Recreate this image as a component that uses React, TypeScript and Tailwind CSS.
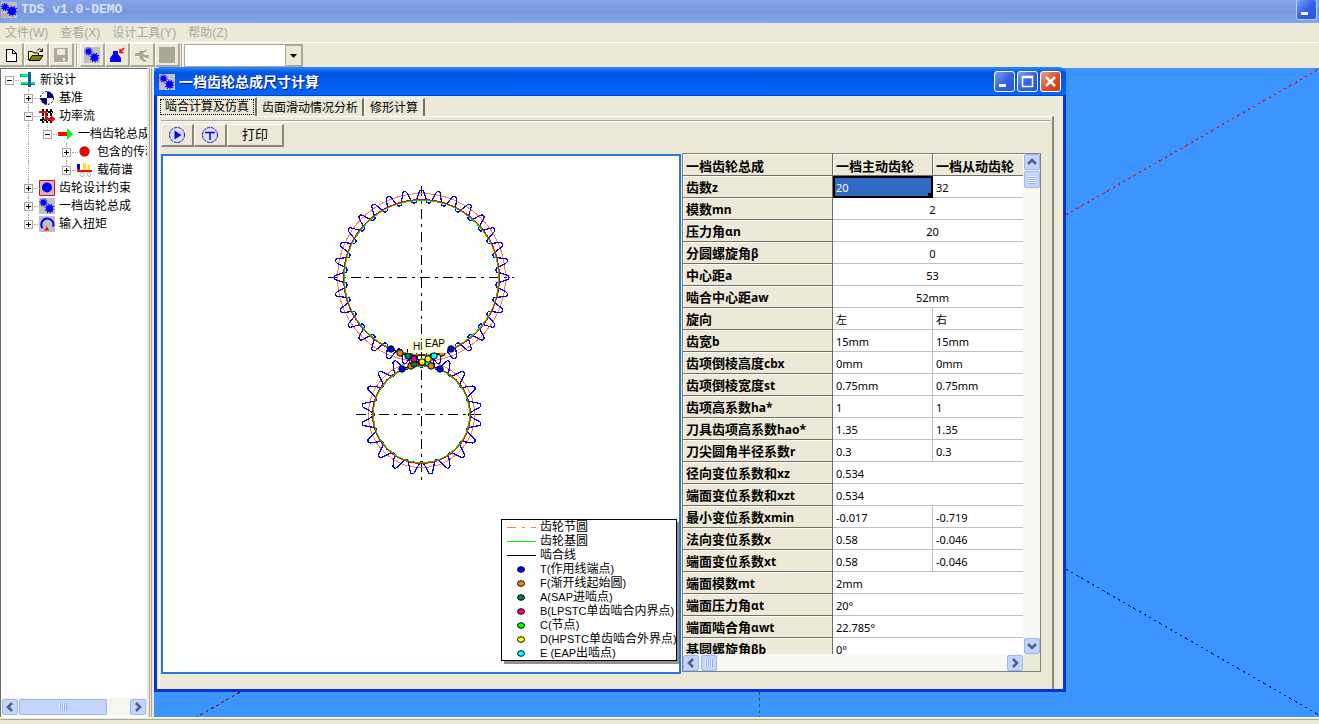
import React, { useState } from 'react';
import clsx from 'clsx';

const UI_FONT = "font-['Liberation_Sans','Noto_Sans_CJK_SC',sans-serif]";

interface TreeNode {
  label: string;
  icon: string;
  open: boolean;
  // one entry per 19px column: '' empty, 'v' line, 'top' line ends at the box
  guides: string[];
}

const TREE: TreeNode[] = [
  { label: '新设计', icon: 'root', open: true, guides: ['box'] },
  { label: '基准', icon: 'datum', open: false, guides: ['', 'v'] },
  { label: '功率流', icon: 'flow', open: true, guides: ['', 'v'] },
  { label: '一档齿轮总成', icon: 'arrow', open: true, guides: ['', 'v', 'top'] },
  { label: '包含的传动部件', icon: 'dot', open: false, guides: ['', 'v', '', 'v'] },
  { label: '载荷谱', icon: 'load', open: false, guides: ['', 'v', '', 'top'] },
  { label: '齿轮设计约束', icon: 'limit', open: false, guides: ['', 'v'] },
  { label: '一档齿轮总成', icon: 'gears', open: false, guides: ['', 'v'] },
  { label: '输入扭矩', icon: 'torque', open: false, guides: ['', 'top'] },
];

interface ParamRow {
  name: string;
  sym?: string;
  values: string[];
  center?: boolean;
}

const ROWS: ParamRow[] = [
  { name: '齿数', sym: 'z', values: ['20', '32'] },
  { name: '模数', sym: 'mn', values: ['2'], center: true },
  { name: '压力角', sym: 'αn', values: ['20'], center: true },
  { name: '分圆螺旋角', sym: 'β', values: ['0'], center: true },
  { name: '中心距', sym: 'a', values: ['53'], center: true },
  { name: '啮合中心距', sym: 'aw', values: ['52mm'], center: true },
  { name: '旋向', values: ['左', '右'] },
  { name: '齿宽', sym: 'b', values: ['15mm', '15mm'] },
  { name: '齿项倒棱高度', sym: 'cbx', values: ['0mm', '0mm'] },
  { name: '齿项倒棱宽度', sym: 'st', values: ['0.75mm', '0.75mm'] },
  { name: '齿项高系数', sym: 'ha*', values: ['1', '1'] },
  { name: '刀具齿项高系数', sym: 'hao*', values: ['1.35', '1.35'] },
  { name: '刀尖圆角半径系数', sym: 'r', values: ['0.3', '0.3'] },
  { name: '径向变位系数和', sym: 'xz', values: ['0.534'] },
  { name: '端面变位系数和', sym: 'xzt', values: ['0.534'] },
  { name: '最小变位系数', sym: 'xmin', values: ['-0.017', '-0.719'] },
  { name: '法向变位系数', sym: 'x', values: ['0.58', '-0.046'] },
  { name: '端面变位系数', sym: 'xt', values: ['0.58', '-0.046'] },
  { name: '端面模数', sym: 'mt', values: ['2mm'] },
  { name: '端面压力角', sym: 'αt', values: ['20°'] },
  { name: '端面啮合角', sym: 'αwt', values: ['22.785°'] },
  { name: '基圆螺旋角', sym: 'βb', values: ['0°'] },
];

// color, latin prefix, description
const LEGEND_POINTS = [
  ['#0000ff', 'T(', '作用线端点'],
  ['#ff8000', 'F(', '渐开线起始圆'],
  ['#008040', 'A(SAP', '进啮点'],
  ['#ff0080', 'B(LPSTC', '单齿啮合内界点'],
  ['#00ff00', 'C(', '节点'],
  ['#ffff00', 'D(HPSTC', '单齿啮合外界点'],
  ['#00ffff', 'E (EAP', '出啮点'],
];

const MESH_POINTS: [number, number, string][] = [
  [228, 193, '#0000ff'],
  [237, 197, '#ff8000'],
  [245, 200, '#008080'],
  [279, 197, '#ff8000'],
  [248, 210, '#ff8000'],
  [251, 208, '#008040'],
  [251, 203, '#ff0080'],
  [265, 207, '#00ffff'],
  [268, 210, '#ff8000'],
  [265, 203, '#ffff00'],
  [271, 200, '#00ffff'],
  [259, 206, '#ffff00'],
  [288, 193, '#0000ff'],
  [239, 213, '#0000ff'],
  [277, 213, '#0000ff'],
];

function polar(cx: number, cy: number, r: number, a: number) {
  return `${(cx + r * Math.cos(a)).toFixed(2)} ${(cy + r * Math.sin(a)).toFixed(2)}`;
}

function gearPath(
  cx: number, cy: number, teeth: number, phase: number,
  tip: number, root: number, tipHalf: number, rootHalf: number,
) {
  const step = (Math.PI * 2) / teeth;
  let d = '';
  for (let i = 0; i < teeth; i++) {
    const a = phase + i * step;
    const p = (r: number, off: number) => polar(cx, cy, r, a + off);
    d += `${i === 0 ? 'M' : 'L'}${p(root + 2, -rootHalf)} `;
    d += `L${p(tip - 3, -tipHalf)} Q${p(tip, -tipHalf * 0.8)} ${p(tip, 0)} `;
    d += `Q${p(tip, tipHalf * 0.8)} ${p(tip - 3, tipHalf)} L${p(root + 2, rootHalf)} `;
    d += `C${p(root - 1, rootHalf)} ${p(root - 1, step - rootHalf)} ${p(root + 2, step - rootHalf)} `;
  }
  return d;
}

function MiniGear({ x, y, r }: { x: number; y: number; r: number }) {
  return (
    <g>
      <circle cx={x} cy={y} r={r - 0.5} fill="#0000ff" />
      {[0, 36, 72, 108, 144].map((deg) => (
        <rect key={deg} x={x - r - 1} y={y - 0.5} width={r * 2 + 2} height={1} fill="#0000ff" transform={`rotate(${deg + 10} ${x} ${y})`} />
      ))}
    </g>
  );
}

function Icon({ name }: { name: string }) {
  return (
    <svg width="16" height="16" viewBox="0 0 16 16" className="shrink-0" aria-hidden="true">
      {name === 'root' && (
        <>
          <path d="M0 2h8v3H0z M1 10h14v3H1z" fill="#00f080" />
          <path d="M0 2h1v3H0zM11 12h4v1h-4zM1 12h7v1H1z" fill="#008070" />
          <path d="M8 0h3v15H8z" fill="#00669c" />
        </>
      )}
      {name === 'datum' && (
        <>
          <circle cx="8" cy="8" r="6.5" fill="#fff" stroke="#000" strokeDasharray="2 1.5" strokeWidth="1" />
          <path d="M8 8V1.500A6.500 6.500 0 0 1 14.500 8zM8 8v6.500A6.500 6.500 0 0 1 1.500 8z" fill="#000080" />
        </>
      )}
      {name === 'flow' && (
        <>
          <path d="M4 1v14M8 1v14M12 1v14M1 4h13M1 12h13" stroke="#000" strokeWidth="2" strokeDasharray="3 1" fill="none" />
          <path d="M0 4h7v7h7M12 8.500l3 2.500-3 2.500" stroke="#ff0000" strokeWidth="2" fill="none" />
        </>
      )}
      {name === 'arrow' && (
        <>
          <path d="M0 6h10v4H0z" fill="#ff0000" />
          <path d="M9 2l6 6-6 6z" fill="#00ff00" />
        </>
      )}
      {name === 'dot' && <circle cx="7.500" cy="7.500" r="4.800" fill="#ff0000" stroke="#600000" strokeWidth=".6" />}
      {name === 'load' && (
        <>
          <path d="M0 2h3v5H0z" fill="#0000ff" />
          <path d="M0 7h3v1h12v2H0z" fill="#ff0000" />
          <path d="M6 1h3v7H6zM11 3h2v5h-2z" fill="#ffe000" />
          <circle cx="5" cy="12.500" r="2" fill="none" stroke="#b0b0b0" />
          <circle cx="12" cy="12.500" r="2" fill="none" stroke="#b0b0b0" />
        </>
      )}
      {name === 'limit' && (
        <>
          <path d="M.5.5h15v15H.5z" fill="#c0c0c0" stroke="#ff0000" />
          <circle cx="8" cy="7.500" r="5" fill="#0000ff" />
        </>
      )}
      {name === 'gears' && (
        <>
          <path d="M0 0h16v16H0z" fill="#c0c0c0" />
          <MiniGear x={4.5} y={4.5} r={3.2} />
          <MiniGear x={10.5} y={10.5} r={4} />
        </>
      )}
      {name === 'app' && (
        <>
          <path d="M0 0h16v16H0z" fill="#c0c0c0" />
          <MiniGear x={4} y={5} r={3.2} />
          <MiniGear x={11} y={9} r={4.6} />
          <path d="M1 12.500h3M2.500 12.500v3M5.500 12v3.500" stroke="#f08080" />
        </>
      )}
      {name === 'torque' && (
        <>
          <path d="M0 0h16v16H0z" fill="#c0c0c0" />
          <path d="M3.500 12A6 6 0 1 1 14 10.500" fill="none" stroke="#0000ff" strokeWidth="2" />
          <path d="M5 14.500l3-4 2 4z" fill="#ff0000" />
        </>
      )}
      {name === 'new' && (
        <path d="M3.500 2.500h6l4 4v8h-10zM9.500 2.500v4h4" fill="#fff" stroke="#000" shapeRendering="crispEdges" />
      )}
      {name === 'open' && (
        <>
          <path d="M.5 13V4.500h4l1 1.500h5v3" fill="#ffff80" stroke="#000" />
          <path d="M1 13.500l3-5h11l-3.500 5z" fill="#808000" stroke="#000" />
          <path d="M9 3.500c1.500-2 3.500-2 4.500.5M14.500 1.500v3h-3" fill="none" stroke="#000" />
        </>
      )}
      {name === 'save' && (
        <>
          <path d="M2 2h14v14H3l-1-1z" fill="#fff" />
          <path d="M1 1h14v14H2l-1-1z" fill="#aca899" />
          <path d="M4 2h8v6H4zM10 11h2v3h-2z" fill="#ece9d8" />
        </>
      )}
      {name === 'weight' && (
        <>
          <path d="M1 15v-4l3-4V4h5v3l3 4v4z" fill="#0000ff" />
          <path d="M15 1l-4 4M11 2v3.500h3.500" fill="none" stroke="#ff0000" strokeWidth="1.500" />
        </>
      )}
      {name === 'swap' && (
        <>
          <path d="M2 8h4l3 2v3M14 9h-3l-3-3 3-3" fill="none" stroke="#fff" strokeWidth="2" transform="translate(1 1)" />
          <path d="M1 6h4V4h5l3-2-1 3-3 1 2 2h4v3h-4l-2-2 1 3 3 2-3 1-4-3-1-3H1z" fill="#aca899" />
        </>
      )}
      {name === 'block' && <path d="M0 0h16v16H0z" fill="#aca899" />}
      {name === 'play' && (
        <>
          <circle cx="8" cy="8" r="7.500" fill="#dfe4f4" stroke="#0000ff" strokeDasharray="3 1" />
          <path d="M5.500 3.500v9l7-4.500z" fill="#0000ff" />
        </>
      )}
      {name === 'tee' && (
        <>
          <circle cx="8" cy="8" r="7.500" fill="#dfe4f4" stroke="#0000ff" strokeDasharray="3 1" />
          <path d="M3 5.500h10M8 5.500V13" stroke="#0000ff" strokeWidth="1.500" />
        </>
      )}
    </svg>
  );
}

function WindowButton({ kind, faded }: { kind: 'min' | 'max' | 'close'; faded?: boolean }) {
  const names = { min: '最小化', max: '最大化', close: '关闭' };
  return (
    <button
      aria-label={names[kind]}
      className={clsx(
        'flex h-[21px] w-[21px] items-center justify-center rounded-[3px] border bg-linear-to-br',
        kind === 'close' ? 'from-[#f0a080] via-[#e0502c] to-[#c83808]' : 'from-[#7e9ef8] via-[#3462e8] to-[#1a58e0]',
        faded ? 'border-[#b8ccf4]' : 'border-white',
      )}
    >
      <svg width="15" height="15" viewBox="0 0 15 15" fill="none" stroke="#fff">
        {kind === 'min' && <path d="M2 11.500h7" strokeWidth="3" />}
        {kind === 'max' && <path d="M2.500 2.500h10v10h-10zM2 3.500h11" strokeWidth="1.500" />}
        {kind === 'close' && <path d="M3 3l9 9M12 3l-9 9" strokeWidth="2.500" />}
      </svg>
    </button>
  );
}

const ARROWS = {
  left: 'M9 3L5 7l4 4',
  right: 'M5 3l4 4-4 4',
  up: 'M3 9l4-4 4 4',
  down: 'M3 5l4 4 4-4',
};

function ScrollButton({ dir }: { dir: keyof typeof ARROWS }) {
  return (
    <button
      aria-label={`scroll ${dir}`}
      className="flex h-4 w-4 shrink-0 items-center justify-center rounded-xs border border-[#9db6ee] bg-[#c4d4fc]"
    >
      <svg width="14" height="14" viewBox="0 0 14 14" fill="none" stroke="#4d6185" strokeWidth="2.500" className="shrink-0">
        <path d={ARROWS[dir]} />
      </svg>
    </button>
  );
}

function Grip({ vertical }: { vertical?: boolean }) {
  return (
    <span className={clsx('flex', vertical && 'flex-col')}>
      {[0, 1, 2, 3].map((i) => (
        <span key={i} className={clsx('box-content border-[#8cb0f8] bg-[#eef4fe]', vertical ? 'h-px w-2 border-b' : 'h-2 w-px border-r')} />
      ))}
    </span>
  );
}

function ToolButton({ icon, label, disabled }: { icon: string; label: string; disabled?: boolean }) {
  return (
    <button
      aria-label={label}
      disabled={disabled}
      className="flex h-6 w-[25px] items-center justify-center border-r-2 border-b-2 border-l border-t border-[#aca899] border-t-white border-l-white"
    >
      <Icon name={icon} />
    </button>
  );
}

function MainHeader() {
  const menus = ['文件(W)', '查看(X)', '设计工具(Y)', '帮助(Z)'];
  return (
    <header>
      <div className="flex h-[23px] items-center bg-linear-to-b from-[#86a6ea] via-[#7a96df] to-[#82a8ea] pr-0.5">
        <span className="pb-1 pl-px">
          <Icon name="app" />
        </span>
        <h1 className="ml-1 flex-1 pb-1 font-['Liberation_Mono',monospace] text-[13px] leading-4 font-bold text-[#d8e4f8]">TDS v1.0-DEMO</h1>
        <div className="pb-1">
          <WindowButton kind="min" faded />
        </div>
      </div>
      <nav className="flex h-5 items-center gap-3 border-b border-white pl-[5px] text-xs text-[#aca899]">
        {menus.map((m) => (
          <button key={m} disabled>{m}</button>
        ))}
      </nav>
      <div className="flex h-[25px] items-start">
        <div className="-ml-px flex">
          <ToolButton icon="new" label="新建" />
          <ToolButton icon="open" label="打开" />
          <ToolButton icon="save" label="保存" disabled />
        </div>
        <span className="mx-0.5 box-content h-6 w-px border-r border-white bg-[#aca899]" />
        <ToolButton icon="gears" label="齿轮" />
        <ToolButton icon="weight" label="载荷" />
        <ToolButton icon="swap" label="切换" disabled />
        <ToolButton icon="block" label="停止" disabled />
        <span className="mx-px box-content h-6 w-px border-r border-white bg-[#aca899]" />
        <div className="relative mt-px h-[23px] w-[119px] border border-[#aca899] bg-white">
          <select aria-label="选择" className="h-full w-full appearance-none outline-none">
            <option></option>
          </select>
          <span className="pointer-events-none absolute inset-y-0 right-0 flex w-[17px] items-center justify-center border border-[#aca899] bg-[#ece9d8]">
            <svg width="7" height="4" viewBox="0 0 7 4"><path d="M0 0h7L3.500 4z" /></svg>
          </span>
        </div>
      </div>
    </header>
  );
}

function TreeRow({ node }: { node: TreeNode }) {
  const last = node.guides.length - 1;
  return (
    <li className="flex h-[18px] items-center">
      {node.guides.map((g, i) => (
        <span key={i} className="relative flex h-[18px] w-[19px] shrink-0 items-center pl-1">
          {(g === 'v' || g === 'top') && (
            <span className={clsx('absolute top-0 left-2 border-l border-dotted border-[#aca899]', g === 'v' ? 'h-[18px]' : 'h-[9px]')} />
          )}
          {i === last && (
            <>
              <span className="absolute top-[9px] left-3.5 w-[6px] border-t border-dotted border-[#aca899]" />
              <button aria-label={node.label} className="relative h-[9px] w-[9px] border border-[#aca899] bg-white">
                <span className="absolute top-[3px] left-px h-px w-[5px] bg-black" />
                {!node.open && <span className="absolute top-px left-[3px] h-[5px] w-px bg-black" />}
              </button>
            </>
          )}
        </span>
      ))}
      <Icon name={node.icon} />
      <span className="ml-1 text-xs leading-[18px] whitespace-nowrap">{node.label}</span>
    </li>
  );
}

function TreePanel() {
  return (
    <aside className="flex w-[154px] shrink-0">
      <div className="flex w-[148px] flex-col border-t border-r border-l border-[#716f64] border-r-[#ece9d8] bg-white">
        <ul className="flex-1 overflow-hidden pt-0.5">
          {TREE.map((n, i) => (
            <TreeRow key={i} node={n} />
          ))}
        </ul>
        <div className="mb-0.5 flex h-[17px] items-center bg-[#f6f5f0] px-px">
          <ScrollButton dir="left" />
          <div className="mx-px flex h-4 w-[88px] items-center justify-center rounded-xs border border-[#9db6ee] bg-[#c4d4fc]">
            <Grip />
          </div>
          <span className="flex-1" />
          <ScrollButton dir="right" />
        </div>
      </div>
      <div className="ml-px w-px bg-[#aca899]" />
      <div className="ml-px w-px bg-[#aca899]" />
    </aside>
  );
}

function GearDrawing() {
  return (
    <svg width="516" height="516" viewBox="0 0 516 516" fill="none" shapeRendering="crispEdges" className="max-w-full">
      <path d="M165 121.500h186M193 258.500h130M258.500 30v294" stroke="#000" strokeDasharray="10 5 3 5" />
      <circle cx="258.500" cy="121.500" r="84" stroke="#ff8040" />
      <circle cx="258.500" cy="258.500" r="53" stroke="#ff8040" />
      <path d={gearPath(258.5, 121.5, 32, -Math.PI / 2, 87.5, 75, 0.032, 0.066)} stroke="#0000ff" strokeWidth="1.200" />
      <path d={gearPath(258.5, 258.5, 20, Math.PI / 20, 60, 47.500, 0.045, 0.11)} stroke="#0000ff" strokeWidth="1.200" />
      <circle cx="258.500" cy="121.500" r="77.500" stroke="#00e000" strokeWidth="2" />
      <circle cx="258.500" cy="121.500" r="78" stroke="#ff0000" strokeWidth="1" />
      <circle cx="258.500" cy="258.500" r="48.500" stroke="#00e000" strokeWidth="2" />
      <circle cx="258.500" cy="258.500" r="49" stroke="#ff0000" strokeWidth="1" />
      <path d="M228 193l49 20M288 193l-49 20" stroke="#000" />
      <g shapeRendering="auto">
        {MESH_POINTS.slice(0, 4).map(([x, y, color], i) => (
          <circle key={i} cx={x} cy={y} r="3.200" fill={color} stroke="#000" />
        ))}
        <path d="M245 184h16v13h-16z" fill="#ffffe1" />
        <path d="M259 181h25v16h-25z" fill="#ffffe1" />
        <path d="M258.500 196v6M244.500 193v3M255 199h7" stroke="#000" />
        {MESH_POINTS.slice(4).map(([x, y, color], i) => (
          <circle key={i} cx={x} cy={y} r="3.200" fill={color} stroke="#000" />
        ))}
        <g fill="#000" className="font-['Liberation_Sans',sans-serif] text-[10px]">
          <text x="250" y="194">Hl</text>
          <text x="262" y="191">EAP</text>
        </g>
      </g>
    </svg>
  );
}

function Legend() {
  return (
    <ul className="absolute right-0.5 bottom-[11px] w-[176px] border border-black bg-white text-xs shadow-[3px_3px_0_#909090]">
      {[
        ['齿轮节圆', '#ff8040', '9 6 3 6'],
        ['齿轮基圆', '#00ff00', ''],
        ['啮合线', '#000000', ''],
      ].map(([label, color, dash]) => (
        <li key={label} className="flex h-[14px] items-center">
          <svg width="38" height="14" viewBox="0 0 38 14" className="shrink-0" shapeRendering="crispEdges">
            <path d="M5 7.500h29" stroke={color} strokeDasharray={dash} />
          </svg>
          <span className="leading-[14px] whitespace-nowrap">{label}</span>
        </li>
      ))}
      {LEGEND_POINTS.map(([color, prefix, text]) => (
        <li key={prefix} className="flex h-[14px] items-center">
          <svg width="38" height="14" viewBox="0 0 38 14" className="shrink-0">
            <ellipse cx="19" cy="7.500" rx="3.500" ry="2.800" fill={color} stroke="#000" />
          </svg>
          <span className="text-[11px] leading-[14px] whitespace-nowrap">
            {prefix}
            <span className="text-xs leading-[14px]">{text}</span>)
          </span>
        </li>
      ))}
    </ul>
  );
}

function ParamTable() {
  const head = 'h-[22px] border-r border-b border-[#716f64] bg-[#ece9d8] px-[3px] pt-0.5 pb-0 text-left text-[13px] leading-4 font-bold whitespace-nowrap shadow-[inset_1px_1px_0_#fff]';
  return (
    <div className="ml-px flex h-[519px] w-[359px] shrink-0 flex-col border border-[#808080]">
      <div className="flex min-h-0 flex-1">
        <div className="min-w-0 flex-1 overflow-hidden bg-white">
          <table className="w-[350px] table-fixed border-separate border-spacing-0 font-['Noto_Sans','Noto_Sans_CJK_SC',sans-serif]">
            <colgroup>
              <col className="w-[150px]" />
              <col className="w-[100px]" />
              <col className="w-[100px]" />
            </colgroup>
            <thead>
              <tr>
                <th scope="col" className={head}>一档齿轮总成</th>
                <th scope="col" className={head}>一档主动齿轮</th>
                <th scope="col" className={head}>一档从动齿轮</th>
              </tr>
            </thead>
            <tbody>
              {ROWS.map((row, r) => (
                <tr key={row.name + row.sym}>
                  <th scope="row" className={head}>
                    {row.name}
                    <span className="text-xs leading-4">{row.sym}</span>
                  </th>
                  {row.values.map((v, c) => (
                    <td
                      key={c}
                      colSpan={row.values.length === 1 ? 2 : 1}
                      className={clsx(
                        'relative h-[22px] border-r border-b px-[3px] pt-0.5 pb-0 text-[11px] leading-4',
                        row.center && 'text-center',
                        r === 0 && c === 0
                          ? 'border-black bg-[#316ac5] text-white shadow-[inset_2px_2px_0_#000,inset_-1px_-1px_0_#000]'
                          : 'border-[#c0c0c0]',
                      )}
                    >
                      {v}
                      {r === 0 && c === 0 && <span className="absolute -right-px -bottom-px h-[5px] w-[5px] bg-black" />}
                    </td>
                  ))}
                </tr>
              ))}
            </tbody>
          </table>
        </div>
        <div className="flex w-[17px] flex-col items-center bg-[#f8f8f4]">
          <ScrollButton dir="up" />
          <div className="mt-px flex h-[17px] w-4 items-center justify-center rounded-xs border border-[#9db6ee] bg-[#c4d4fc]">
            <Grip vertical />
          </div>
          <span className="flex-1" />
          <ScrollButton dir="down" />
        </div>
      </div>
      <div className="flex h-[17px]">
        <div className="flex flex-1 items-center bg-[#f8f8f4]">
          <ScrollButton dir="left" />
          <div className="ml-0.5 flex h-4 w-4 items-center justify-center rounded-xs border border-[#9db6ee] bg-[#c4d4fc]">
            <Grip />
          </div>
          <span className="flex-1" />
          <ScrollButton dir="right" />
        </div>
        <div className="w-[17px]" />
      </div>
    </div>
  );
}

function GearDialog() {
  const [tab, setTab] = useState(0);
  const tabs = ['啮合计算及仿真', '齿面滑动情况分析', '修形计算'];
  const button = 'flex h-[23px] items-center justify-center border-t border-r-2 border-b-2 border-l border-[#8a867a] border-t-white border-l-white';

  return (
    <section className="absolute -top-px left-0 flex h-[625px] w-[912px] flex-col rounded-t-lg border-x-[3px] border-b-[3px] border-[#0831d9] bg-[#ece9d8]">
      <div className="-mx-[3px] flex h-[29px] shrink-0 items-center rounded-t-lg bg-linear-to-b from-[#2a8cff] from-0% via-[#0053e1] via-20% to-[#0066ff] to-90% pr-[5px] pl-[5px] shadow-[inset_0_-1px_0_#0040d0]">
        <Icon name="gears" />
        <h2 className="ml-1 flex-1 text-sm leading-5 font-bold text-white [text-shadow:1px_1px_0_#0a1883]">一档齿轮总成尺寸计算</h2>
        <div className="flex gap-0.5">
          <WindowButton kind="min" />
          <WindowButton kind="max" />
          <WindowButton kind="close" />
        </div>
      </div>
      <div className="flex flex-1 flex-col pt-px pr-[9px] pl-0.5">
        <div role="tablist" className="flex h-[19px] items-end">
          {tabs.map((t, i) => (
            <button
              key={t}
              role="tab"
              aria-selected={tab === i}
              onClick={() => setTab(i)}
              className={clsx(
                'border-t border-r-2 border-l border-t-white border-r-[#716f64] border-l-white text-xs leading-4 whitespace-nowrap',
                tab === i ? 'h-[19px] pr-px' : 'h-[18px]',
                tab !== i && (i === 2 ? 'px-[5px]' : 'px-[4px]'),
              )}
            >
              <span className={clsx('block', tab === i && 'border border-dotted border-black px-1 leading-[14px]')}>{t}</span>
            </button>
          ))}
        </div>
        <div className="flex-1 border-t border-r-2 border-l border-white border-r-[#8a867a] pt-[3px] pr-[11px] pl-px">
          <div className="-mr-2.5 h-0.5 border-t border-b border-[#aca899] border-b-white" />
          <div className="mt-0.5 flex">
            <button aria-label="播放" className={clsx(button, 'w-[33px]')}>
              <Icon name="play" />
            </button>
            <button aria-label="T" className={clsx(button, 'w-[33px]')}>
              <Icon name="tee" />
            </button>
            <button className={clsx(button, 'w-[57px] text-[13px]')}>打印</button>
          </div>
          <div className="mt-1.5 flex items-start">
            <div className="relative mt-px h-[520px] min-w-0 flex-1 overflow-hidden border-2 border-[#2878d8] bg-white">
              <GearDrawing />
              <Legend />
            </div>
            <ParamTable />
          </div>
        </div>
      </div>
    </section>
  );
}

export default function App() {
  return (
    <div className={clsx('flex h-screen flex-col overflow-hidden bg-[#ece9d8] text-black', UI_FONT)}>
      <MainHeader />
      <div className="flex min-h-0 flex-1">
        <TreePanel />
        <main className="relative min-w-0 flex-1 bg-[#3c95ff]">
          <svg className="absolute inset-0 h-full w-full" viewBox="0 0 1165 649" preserveAspectRatio="xMidYMid slice" shapeRendering="crispEdges" strokeDasharray="3 3">
            <path d="M605 324L1165 1" stroke="#ff0000" />
            <path d="M605 324L1165 647" stroke="#0000ff" />
            <path d="M605 324L43 649" stroke="#800000" />
            <path d="M605.500 324v325" stroke="#008000" />
          </svg>
          <GearDialog />
        </main>
      </div>
      <footer className="h-[7px] border-t border-white pt-px">
        <div className="h-px bg-[#aca899]" />
      </footer>
    </div>
  );
}
